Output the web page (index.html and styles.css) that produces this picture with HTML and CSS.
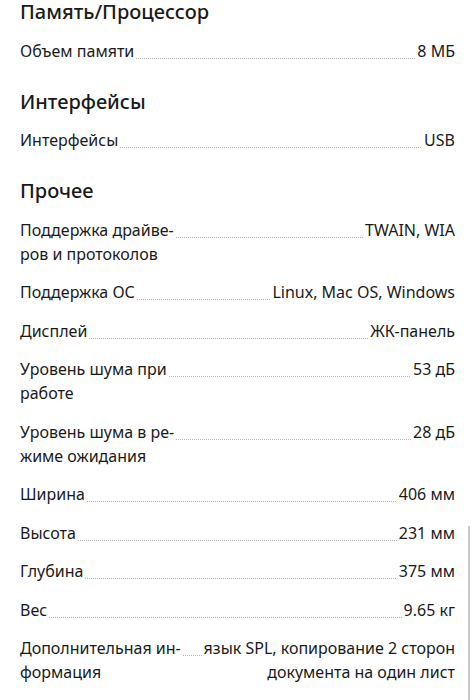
FILE: index.html
```html
<!DOCTYPE html>
<html lang="ru">
<head>
<meta charset="utf-8">
<link rel="stylesheet" href="styles.css">
</head>
<body>
<div class="specs">
  <section class="group">
    <h2 class="group-title">Память/Процессор</h2>
    <div class="row"><div class="label">Объем памяти</div><div class="dots"></div><div class="value">8 МБ</div></div>
  </section>
  <section class="group">
    <h2 class="group-title">Интерфейсы</h2>
    <div class="row"><div class="label">Интерфейсы</div><div class="dots"></div><div class="value">USB</div></div>
  </section>
  <section class="group">
    <h2 class="group-title">Прочее</h2>
    <div class="row"><div class="label">Поддержка драйве-<br>ров и протоколов</div><div class="dots"></div><div class="value">TWAIN, WIA</div></div>
    <div class="row"><div class="label">Поддержка ОС</div><div class="dots"></div><div class="value">Linux, Mac OS, Windows</div></div>
    <div class="row"><div class="label">Дисплей</div><div class="dots"></div><div class="value">ЖК-панель</div></div>
    <div class="row"><div class="label">Уровень шума при<br>работе</div><div class="dots"></div><div class="value">53 дБ</div></div>
    <div class="row"><div class="label">Уровень шума в ре-<br>жиме ожидания</div><div class="dots"></div><div class="value">28 дБ</div></div>
    <div class="row"><div class="label">Ширина</div><div class="dots"></div><div class="value">406 мм</div></div>
    <div class="row"><div class="label">Высота</div><div class="dots"></div><div class="value">231 мм</div></div>
    <div class="row"><div class="label">Глубина</div><div class="dots"></div><div class="value">375 мм</div></div>
    <div class="row"><div class="label">Вес</div><div class="dots"></div><div class="value">9.65 кг</div></div>
    <div class="row"><div class="label">Дополнительная ин-<br>формация</div><div class="dots"></div><div class="value">язык SPL, копирование 2 сторон<br>документа на один лист</div></div>
  </section>
</div>
<div class="scrollbar"></div>
</body>
</html>
```

FILE: styles.css
```css
html, body {
  margin: 0;
  padding: 0;
  background: #fff;
}
body {
  font-family: "Noto Sans", "Open Sans", sans-serif;
  color: #1a1a1a;
  position: relative;
  height: 700px;
  overflow: hidden;
}
.specs {
  padding: 0 20px 0 20px;
  width: 435px;
  display: flex;
  flex-direction: column;
  gap: 27px;
}
.group {
  display: flex;
  flex-direction: column;
  gap: 14.5px;
}
.group-title {
  margin: 0;
  font-size: 20px;
  line-height: 24px;
  font-weight: 500;
}
.row {
  display: flex;
  align-items: flex-start;
  font-size: 16px;
  line-height: 24px;
}
.label {
  flex: 0 0 auto;
  white-space: nowrap;
}
.dots {
  flex: 1 1 auto;
  min-width: 12px;
  height: 24px;
  margin: 0 2px;
  background-image: linear-gradient(to right, #b5b5b5 1px, transparent 1px);
  background-size: 2px 1px;
  background-repeat: repeat-x;
  background-position: 0 19px;
}
.value {
  flex: 0 1 auto;
  text-align: right;
  white-space: nowrap;
}
.scrollbar {
  position: absolute;
  right: 5px;
  top: 526px;
  width: 2px;
  height: 174px;
  background: #c8c8c8;
}
```
